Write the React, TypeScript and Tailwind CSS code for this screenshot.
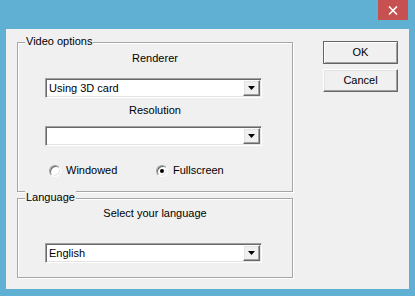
const sunken =
  "border border-t-[#a0a0a0] border-l-[#a0a0a0] border-b-white border-r-white shadow-[inset_1px_1px_0_#696969,inset_-1px_-1px_0_#e3e3e3]";
const raised =
  "border border-t-white border-l-white border-b-[#696969] border-r-[#696969] shadow-[inset_-1px_-1px_0_#a0a0a0,inset_1px_1px_0_#e3e3e3]";

function Combo({ value }: { value?: string }) {
  return (
    <div className={`ml-[27px] flex h-[20px] w-[217px] items-center self-start bg-white p-[1px] ${sunken}`}>
      <div className="flex-1 pl-[2px] text-[11px] leading-[13px] text-black">{value}</div>
      <div className={`flex h-[16px] w-[17px] items-center justify-center bg-[#f0f0f0] ${raised}`}>
        <svg width="7" height="4" viewBox="0 0 7 4">
          <path d="M0 0 H7 L3.5 4 Z" fill="#000" />
        </svg>
      </div>
    </div>
  );
}

function Radio({ label, checked, width }: { label: string; checked?: boolean; width: string }) {
  return (
    <div className={`flex items-center gap-[5px] ${width}`}>
      <div className="flex h-[12px] w-[12px] items-center justify-center rounded-full border border-t-[#a0a0a0] border-l-[#a0a0a0] border-b-white border-r-white bg-white shadow-[inset_1px_1px_0_#696969,inset_-1px_-1px_0_#e3e3e3]">
        {checked ? <div className="h-[4px] w-[4px] rounded-full bg-black" /> : null}
      </div>
      <span className="text-[11px] leading-[13px] text-black">{label}</span>
    </div>
  );
}

function GroupBox({ title, height, children }: { title: string; height: string; children: React.ReactNode }) {
  return (
    <div
      className={`relative flex w-[276px] flex-col items-center border border-[#a6a6a6] shadow-[inset_1px_1px_0_#fff,1px_1px_0_#fff] ${height}`}
    >
      <span className="absolute left-[7px] top-[-8px] bg-[#f0f0f0] px-[1px] text-[11px] leading-[13px] text-black">
        {title}
      </span>
      {children}
    </div>
  );
}

export default function App() {
  return (
    <div
      className="flex h-[296px] w-[415px] flex-col bg-[#5fb0d3]"
      style={{ fontFamily: '"Liberation Sans", Arial, sans-serif' }}
    >
      <div className="flex h-[29px] justify-end pr-[7px]">
        <div className="flex h-[20px] w-[30px] items-center justify-center bg-[#c75050]">
          <svg width="10" height="9" viewBox="0 0 10 9">
            <path d="M1 0.5 L9 8.5 M9 0.5 L1 8.5" stroke="#fff" strokeWidth="1.6" />
          </svg>
        </div>
      </div>

      <div className="ml-[6px] flex h-[260px] w-[403px] bg-[#f0f0f0] pl-[11px] pt-[13px]">
        <div className="flex flex-col">
          <GroupBox title="Video options" height="h-[150px]">
            <p className="mt-[9px] text-[11px] leading-[13px] text-black">Renderer</p>
            <div className="mt-[13px] self-stretch flex">
              <Combo value="Using 3D card" />
            </div>
            <p className="mt-[6px] text-[11px] leading-[13px] text-black">Resolution</p>
            <div className="mt-[9px] self-stretch flex">
              <Combo />
            </div>
            <div className="mt-[18px] flex self-stretch pl-[31px]">
              <Radio label="Windowed" width="w-[107px]" />
              <Radio label="Fullscreen" checked width="w-[100px]" />
            </div>
          </GroupBox>
          <div className="mt-[6px]">
            <GroupBox title="Language" height="h-[80px]">
              <p className="mt-[8px] text-[11px] leading-[13px] text-black">Select your language</p>
              <div className="mt-[23px] self-stretch flex">
                <Combo value="English" />
              </div>
            </GroupBox>
          </div>
        </div>

        <div className="ml-[30px] flex flex-col">
          <button className="mt-[-1px] flex h-[23px] w-[75px] items-center justify-center border border-[#646464] bg-[#f0f0f0] text-[11px] text-black shadow-[inset_1px_1px_0_#fff,inset_-1px_-1px_0_#a0a0a0]">
            OK
          </button>
          <button className={`mt-[5px] flex h-[23px] w-[75px] items-center justify-center bg-[#f0f0f0] text-[11px] text-black ${raised}`}>
            Cancel
          </button>
        </div>
      </div>
    </div>
  );
}
